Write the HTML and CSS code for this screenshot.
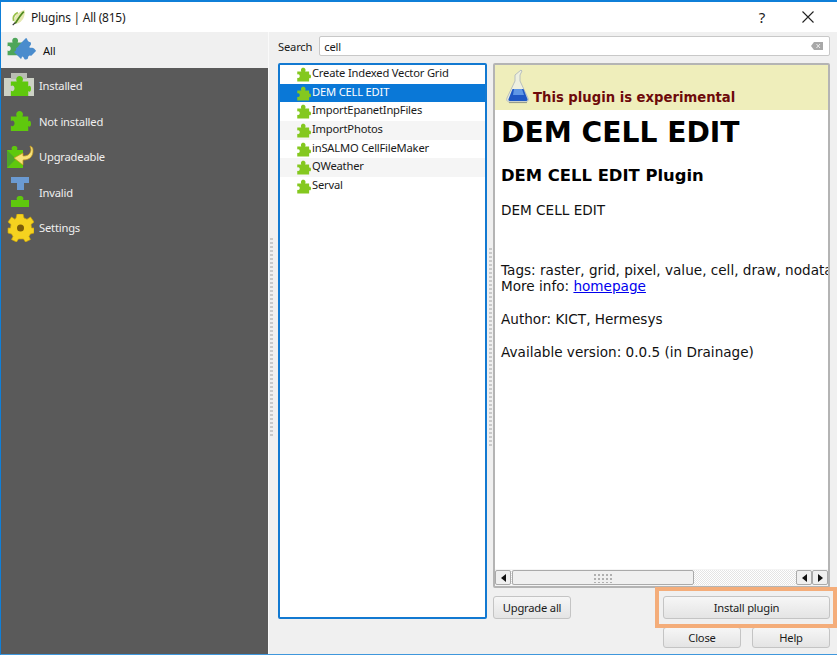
FILE: index.html
```html
<!DOCTYPE html>
<html lang="en">
<head>
<meta charset="utf-8">
<title>Plugins | All (815)</title>
<link rel="stylesheet" href="styles.css">
</head>
<body>
<svg class="defs" width="0" height="0" aria-hidden="true">
  <defs>
    <symbol id="puzzle" viewBox="0 0 24 24">
      <path d="M2 7h6.500C7.500 5.500 7.500 1 11.500 1s4.500 4.500 3 6H21v5.500c1.500-1.500 3-.5 3 2.500s-1.500 4-3 2.500V23H2v-6c2 1.500 4 0 4-2.500S4 10.500 2 12z"/>
    </symbol>
  </defs>
</svg>
<div class="window">
  <header class="titlebar">
    <svg class="app-icon" viewBox="0 0 20 20" width="17" height="17"><path d="M4 16C3 9 8 4 16 1c1 7-2 14-8 16z" fill="#e4e8b0"/><path d="M5 17C8 12 11 7 15 3" stroke="#4f8a1f" stroke-width="2" fill="none"/><path d="M2 19l3-3" stroke="#333" stroke-width="1.500"/><path d="M8 4C4 6 2 10 3 14" stroke="#9ac04a" stroke-width="2" fill="none"/></svg>
    <span class="title">Plugins | All (815)</span>
    <span class="help-mark">?</span>
    <svg class="close-x" viewBox="0 0 12 12" width="12" height="12"><path d="M.5.5l11 11M11.500.5l-11 11" stroke="#222" stroke-width="1.100"/></svg>
  </header>
  <div class="body">
    <nav class="sidebar">
      <div class="nav-item nav-active">
        <svg class="icon-all" viewBox="0 0 30 29" width="30" height="29"><use href="#puzzle" x="0" y="1" width="19" height="19" class="p-green"/><path class="p-blue" d="M14 8l6-6c1.500.5 1 2.500 2.500 3.500S25 5.500 25 8c0 1.500-2 2-1.500 3.500 1 1 3-.5 4.500 1 1 1 2 2 2 2.500l-5 5c-1.500-1-3 0-3 2 0 1.500-2 1.500-3 1.500s-1-3-3-3c0 0-.5 2.500-1 2.500l-7-7c1.500-1 2.500-1.500 2-3-.5-1 2-1.500 2.500-3z"/></svg>
        <span>All</span>
      </div>
      <div class="nav-list">
        <div class="nav-item">
          <span class="icon-wrap icon-installed"><svg viewBox="0 0 24 24" width="22" height="22" class="p-lime"><use href="#puzzle"/></svg></span>
          <span>Installed</span>
        </div>
        <div class="nav-item">
          <span class="icon-wrap"><svg viewBox="0 0 24 24" width="22" height="22" class="p-lime"><use href="#puzzle"/></svg></span>
          <span>Not installed</span>
        </div>
        <div class="nav-item">
          <span class="icon-wrap"><svg viewBox="0 0 28 23" width="28" height="23"><path class="p-lime" d="M1 5h5c-1-2 0-4 2.500-4S12 3 11 5h6v18H1z"/><path d="M1 5l9 9-9 9z" fill="#4ea62a"/><path d="M24 1c3 1 3 3 3 5 0 5-3 9-10 9v5L8 13l9-5v3c4 0 7-1 8-6 0-2-1-3-1-4z" fill="#f6e27a" stroke="#c79a17" stroke-width=".7"/></svg></span>
          <span>Upgradeable</span>
        </div>
        <div class="nav-item">
          <span class="icon-wrap"><svg viewBox="0 0 20 30" width="20" height="30"><path d="M1 0h18v6h-5v7H7V6H1z" fill="#6b9ad2"/><path class="p-lime" d="M1 23h6c-1-2 0-4 3-4s4 2 3 4h6v7H1z"/></svg></span>
          <span>Invalid</span>
        </div>
        <div class="nav-item">
          <span class="icon-wrap"><svg viewBox="0 0 28 28" width="28" height="28"><path d="M11 0h6l1 4 3 1.300L24.500 3 28 8l-3 2.500.6 3.500 2.400 0v5l-3.600 1-1.400 2.500 1.500 3-5 2.500-2-3h-5l-2 3-5-2.500 1.500-3L5.600 20 2 19v-5h2.400L5 10.500 2 8l3.500-5L9 5.300 10 4z" fill="#f5d21f" stroke="#c9a30c" stroke-width=".7"/><circle cx="14.500" cy="14" r="3.500" fill="#7a5c0a"/></svg></span>
          <span>Settings</span>
        </div>
      </div>
    </nav>
    <main class="main">
      <div class="search-row">
        <label class="search-label">Search</label>
        <div class="search-box">
          <span>cell</span>
          <svg class="clear-icon" viewBox="0 0 12 8" width="12" height="8"><path d="M3 0h9v8H3L0 4z" fill="#a8a8a8"/><path d="M5.500 2l3.500 4M9 2L5.500 6" stroke="#eee"/></svg>
        </div>
      </div>
      <div class="panes">
        <div class="splitter splitter-left"></div>
        <ul class="plugin-list">
          <li class="plugin"><svg class="p-list" width="15" height="15"><use href="#puzzle"/></svg><span>Create Indexed Vector Grid</span></li>
          <li class="plugin plugin-selected"><svg class="p-list" width="15" height="15"><use href="#puzzle"/></svg><span>DEM CELL EDIT</span></li>
          <li class="plugin"><svg class="p-list" width="15" height="15"><use href="#puzzle"/></svg><span>ImportEpanetInpFiles</span></li>
          <li class="plugin plugin-alt"><svg class="p-list" width="15" height="15"><use href="#puzzle"/></svg><span>ImportPhotos</span></li>
          <li class="plugin"><svg class="p-list" width="15" height="15"><use href="#puzzle"/></svg><span>inSALMO CellFileMaker</span></li>
          <li class="plugin plugin-alt"><svg class="p-list" width="15" height="15"><use href="#puzzle"/></svg><span>QWeather</span></li>
          <li class="plugin"><svg class="p-list" width="15" height="15"><use href="#puzzle"/></svg><span>Serval</span></li>
        </ul>
        <div class="splitter splitter-right"></div>
        <div class="right-col">
          <section class="details">
            <div class="details-view">
              <div class="banner">
                <svg class="flask" viewBox="0 0 24 35" width="24" height="35"><path d="M9 6l6-5 1 1-2 4v6l8 17c1 3-1 4-3 4H4c-2 0-4-1-3-4l8-17z" fill="#eef0df" stroke="#aab3bb" stroke-width=".8"/><path d="M6.500 20h11l4 10c.5 1.500-.5 2-2 2H4.500c-1.500 0-2.500-.5-2-2z" fill="#1f57c4"/><path d="M8 20h8l2 6H7z" fill="#5f96e6"/><path d="M3 33.500h18" stroke="#6f7a70" stroke-width="1.200" opacity=".6"/></svg>
                <span>This plugin is experimental</span>
              </div>
              <div class="doc">
                <h1>DEM CELL EDIT</h1>
                <h2>DEM CELL EDIT Plugin</h2>
                <p class="desc">DEM CELL EDIT</p>
                <p class="tags">Tags: raster, grid, pixel, value, cell, draw, nodata<br>More info: <a href="#">homepage</a></p>
                <p>Author: KICT, Hermesys</p>
                <p>Available version: 0.0.5 (in Drainage)</p>
              </div>
            </div>
            <div class="scrollbar">
              <span class="sb-btn"><i class="arrow-left"></i></span>
              <div class="sb-track"><div class="sb-thumb"><span class="sb-grip"></span></div></div>
              <span class="sb-btn"><i class="arrow-left"></i></span>
              <span class="sb-btn"><i class="arrow-right"></i></span>
            </div>
          </section>
          <div class="actions">
            <button class="btn btn-upgrade">Upgrade all</button>
            <button class="btn btn-install">Install plugin</button>
            <div class="highlight"></div>
          </div>
        </div>
      </div>
      <div class="footer">
        <button class="btn btn-footer btn-close">Close</button>
        <button class="btn btn-footer">Help</button>
      </div>
    </main>
  </div>
</div>
</body>
</html>
```
FILE: styles.css
```css
* { box-sizing: border-box; }
html, body { margin: 0; height: 100%; }
body {
  font-family: "Noto Sans", "Open Sans", sans-serif;
  font-size: 11.2px;
  letter-spacing: -0.2px;
  color: #1a1a1a;
  overflow: hidden;
}
.defs { position: absolute; }
.p-lime { fill: #5fc80d; }
.p-list { fill: #84c81f; }
.p-green { fill: #4ea65a; }
.p-blue { fill: #4a8ccd; }
.window {
  width: 837px;
  height: 655px;
  display: flex;
  flex-direction: column;
  border-top: 2px solid #0f7fd8;
  border-left: 1px solid #0f7fd8;
  border-bottom: 1px solid #3f97dc;
  background: #f0f0f0;
}
.titlebar {
  height: 30px;
  flex: none;
  display: flex;
  align-items: center;
  background: #fff;
  padding-left: 10px;
}
.app-icon { margin-right: 3px; }
.title { font-size: 12px; flex: 1; letter-spacing: -0.25px; }
.help-mark { font-size: 15px; margin-right: 37px; color: #222; }
.close-x { margin-right: 23px; }
.body { flex: 1; display: flex; min-height: 0; }
.sidebar { width: 267px; flex: none; display: flex; flex-direction: column; }
.nav-item {
  height: 35.500px;
  display: flex;
  align-items: center;
  color: #f0f0f0;
  flex: none;
}
.nav-active { height: 36px; color: #111; padding-left: 5px; gap: 7px; background: #f0f0f0; }
.nav-list { flex: 1; background: #5a5a5a; }
.icon-wrap {
  width: 38px;
  display: flex;
  justify-content: center;
  flex: none;
  padding: 0 4px 0 4px;
}
.icon-installed { position: relative; }
.icon-installed::before {
  content: "";
  position: absolute;
  left: 3px;
  top: 3px;
  width: 30px;
  height: 18px;
  background: #cdd2c6;
}
.icon-installed::after {
  content: "";
  position: absolute;
  left: 10px;
  top: -2px;
  width: 16px;
  height: 6px;
  background: #b9bdb3;
}
.icon-installed svg { position: relative; z-index: 1; }
.main {
  flex: 1;
  min-width: 0;
  display: flex;
  flex-direction: column;
  padding: 4px 7px 0 9px;
  border-left: 1px solid #fafafa;
}
.search-row { display: flex; align-items: center; gap: 7px; height: 20px; flex: none; }
.search-box {
  flex: 1;
  height: 20px;
  background: #fff;
  border: 1px solid #c8c8c8;
  border-radius: 2px;
  padding: 0 6px 0 4px;
  display: flex;
  align-items: center;
  justify-content: space-between;
}
.panes { display: flex; height: 556px; margin-top: 7px; flex: none; position: relative; }
.splitter {
  position: absolute;
  width: 3px;
  height: 200px;
  background: repeating-linear-gradient(#c9c9c9 0 2px, transparent 2px 4px);
}
.splitter-left { left: -8px; top: 175px; }
.splitter-right { left: 211px; top: 185px; }
.plugin-list {
  width: 209px;
  flex: none;
  margin: 0;
  padding: 0;
  list-style: none;
  background: #fff;
  border: 2px solid #1279d1;
  border-radius: 2px;
}
.plugin {
  height: 18.700px;
  display: flex;
  align-items: center;
  padding-left: 16px;
  gap: 0;
  white-space: nowrap;
}
.plugin span { padding: 0 0 4px 1px; }
.plugin svg { flex: none; }
.plugin-selected { background: #0a78d7; color: #fff; }
.plugin-alt { background: #f5f5f5; }
.right-col { width: 337px; margin-left: 6px; flex: none; display: flex; flex-direction: column; }
.details {
  height: 525px;
  flex: none;
  border: 2px solid #b4b4b4;
  border-radius: 2px;
  background: #fff;
  display: flex;
  flex-direction: column;
}
.details-view {
  flex: 1;
  min-height: 0;
  overflow: hidden;
  font-family: "DejaVu Sans", sans-serif;
  font-size: 13.600px;
  letter-spacing: 0;
  color: #111;
}
.banner {
  height: 45px;
  background: #efeebb;
  display: flex;
  align-items: flex-end;
  padding: 0 0 5px 11px;
  gap: 3px;
  font-weight: bold;
  color: #6d0a0a;
  font-size: 13.200px;
  white-space: nowrap;
}
.flask { margin-bottom: 1px; }
.doc { padding: 0 0 0 6px; white-space: nowrap; line-height: 16px; }
.doc h1 { font-size: 28.200px; line-height: 34px; margin: 6px 0 0; font-weight: bold; color: #000; }
.doc h2 { font-size: 16.400px; line-height: 20px; margin: 16px 0 0; font-weight: bold; color: #000; }
.doc p { margin: 0 0 17px; }
.doc .desc { margin: 16px 0 44px; }
.doc a { color: #0000ee; }
.scrollbar {
  height: 17px;
  flex: none;
  display: flex;
  align-items: stretch;
  background: #f4f4f4;
  padding: 1px 0;
}
.sb-btn {
  width: 16px;
  flex: none;
  background: #f0f0f0;
  border: 1px solid #aaa;
  border-radius: 2px;
  display: flex;
  align-items: center;
  justify-content: center;
}
.sb-track {
  flex: 1;
  background: repeating-conic-gradient(#e4e4e4 0 25%, #fff 0 50%) 0 0 / 2px 2px;
}
.sb-thumb {
  width: 182px;
  height: 100%;
  margin-left: 1px;
  display: flex;
  align-items: center;
  justify-content: center;
  background: #f0f0f0;
  border: 1px solid #aaa;
  border-radius: 2px;
}
.sb-grip {
  width: 20px;
  height: 10px;
  background: radial-gradient(circle, #b0b0b0 .9px, transparent 1.200px) 0 0 / 4px 4px;
}
.arrow-left, .arrow-right {
  width: 0;
  height: 0;
  border-top: 4px solid transparent;
  border-bottom: 4px solid transparent;
}
.arrow-left { border-right: 5px solid #111; }
.arrow-right { border-left: 5px solid #111; }
.actions {
  display: flex;
  justify-content: space-between;
  position: relative;
  height: 23px;
  margin-top: 8px;
  flex: none;
}
.btn {
  font: inherit;
  letter-spacing: inherit;
  color: #1a1a1a;
  background: linear-gradient(#f6f6f6, #e4e4e4);
  border: 1px solid #c4c4c4;
  border-radius: 3px;
  padding: 0;
}
.btn-upgrade { width: 78px; }
.btn-install { width: 167px; }
.highlight {
  position: absolute;
  right: -7px;
  top: -9px;
  width: 182px;
  height: 41px;
  border: 4px solid #f4ad7a;
  pointer-events: none;
}
.footer { display: flex; justify-content: flex-end; gap: 11px; height: 21px; margin-top: 8px; flex: none; }
.btn-footer { width: 78px; }
```
